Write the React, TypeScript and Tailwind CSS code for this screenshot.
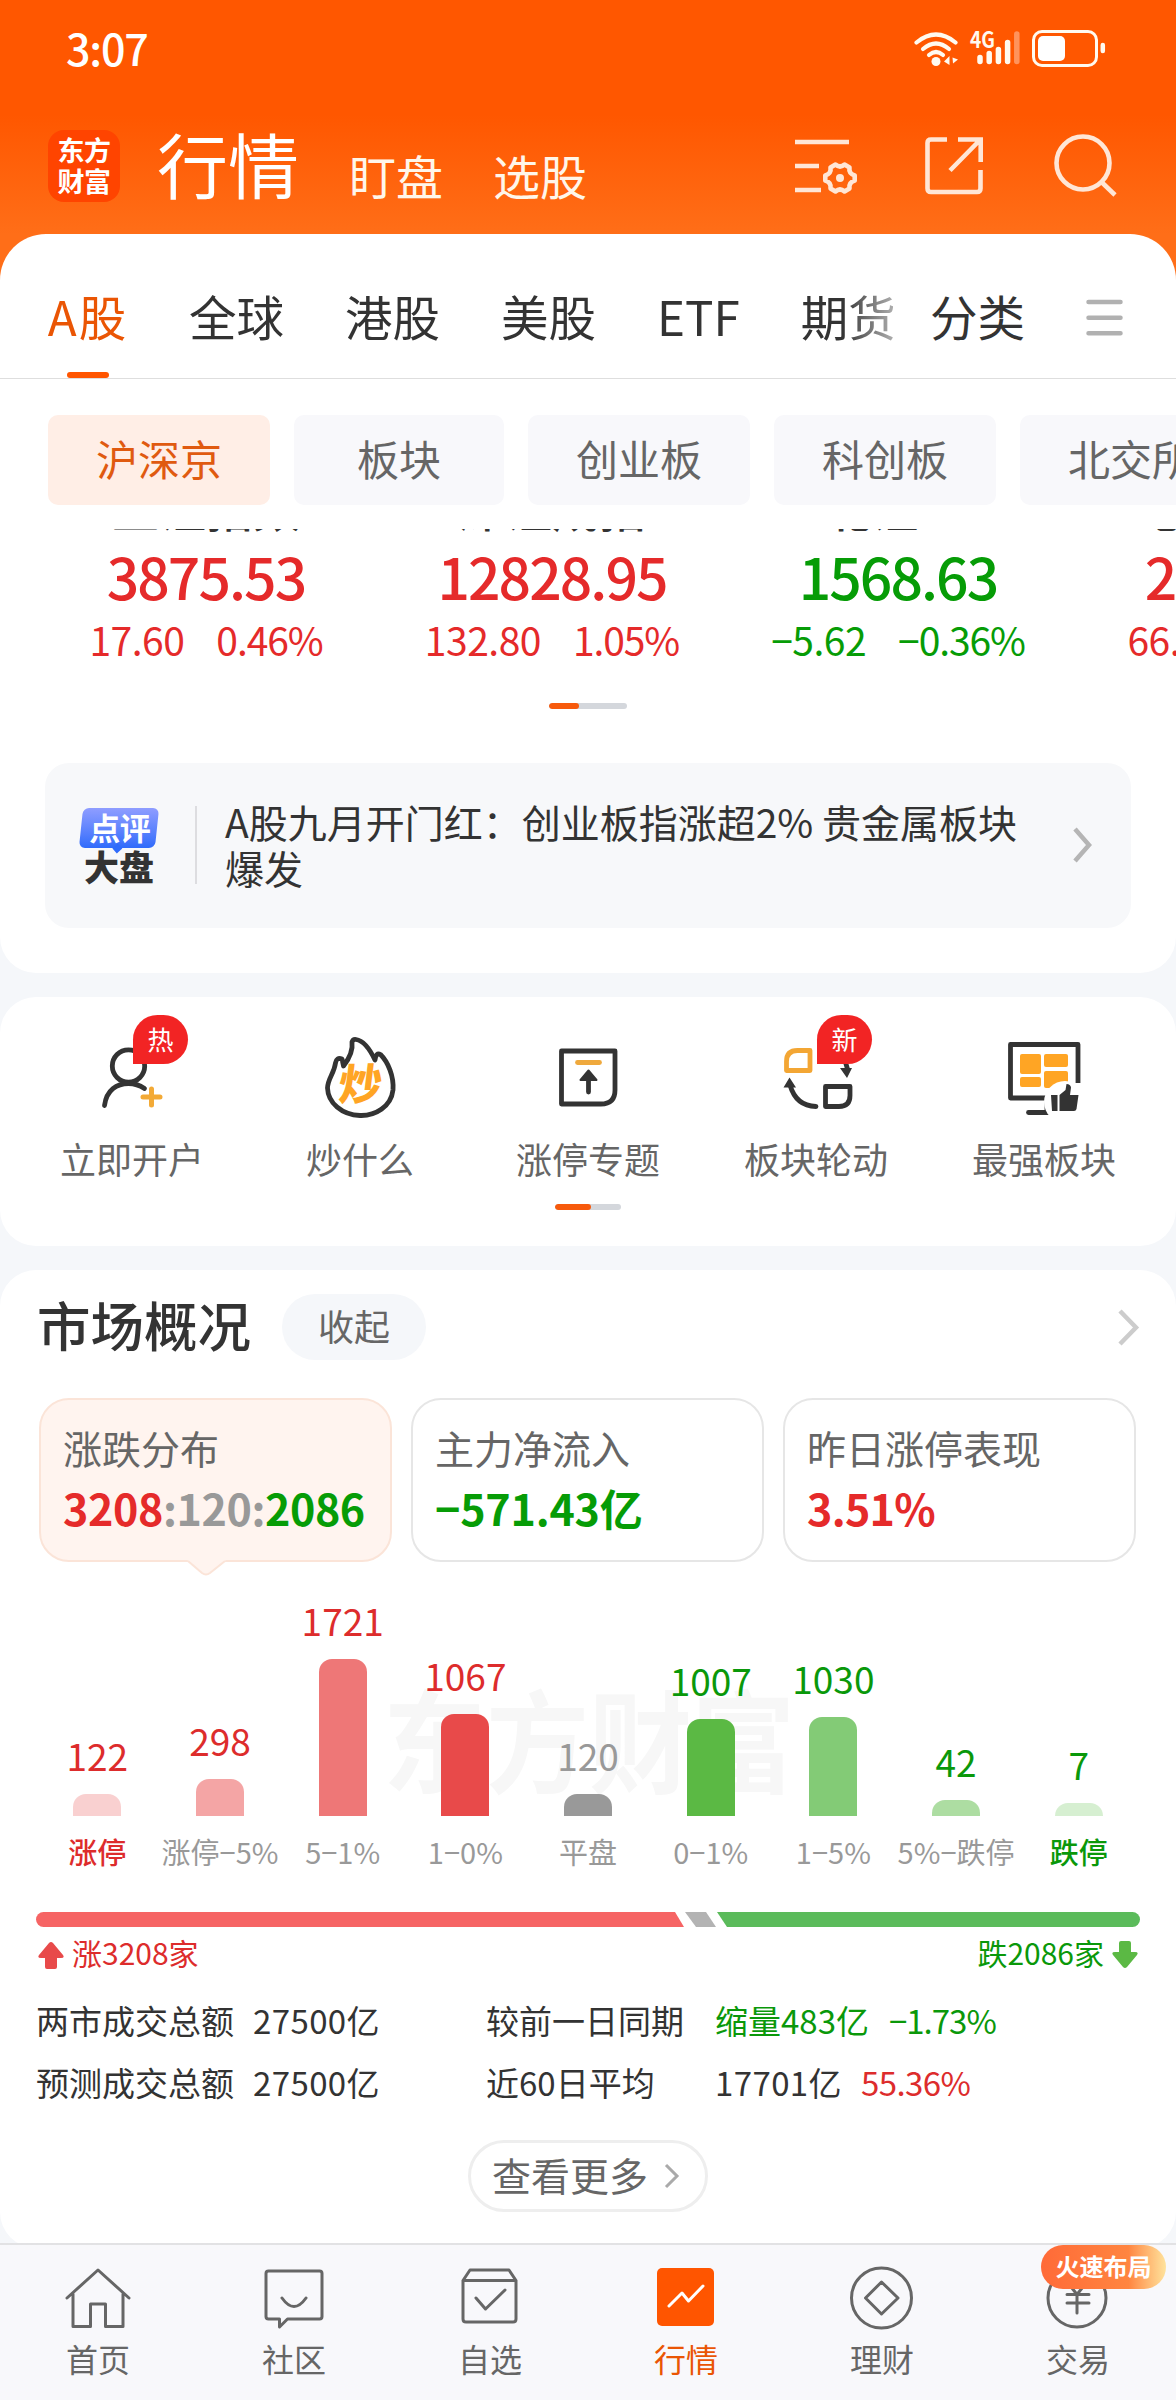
import type { ReactNode } from "react";

const ORANGE = "text-[#ea5504]";
const RED = "text-[#dd2c2c]";
const GREEN = "text-[#0a980a]";

const markets = ["全球", "港股", "美股", "ETF", "期货"];

const chips = [
  { name: "沪深京", width: "w-[222px]" },
  { name: "板块", width: "w-[210px]" },
  { name: "创业板", width: "w-[222px]" },
  { name: "科创板", width: "w-[222px]" },
  { name: "北交所", width: "w-[222px]" },
];

const indices = [
  { name: "上证指数", value: "3875.53", diff: "17.60", pct: "0.46%", tone: "text-[#e52a2a]" },
  { name: "深证成指", value: "12828.95", diff: "132.80", pct: "1.05%", tone: "text-[#e52a2a]" },
  { name: "北证50", value: "1568.63", diff: "−5.62", pct: "−0.36%", tone: "text-[#069c06]" },
  { name: "创业板指", value: "2956.37", diff: "66.24", pct: "2.29%", tone: "text-[#e52a2a]" },
];

const distribution = [
  { count: 122, height: 22, bar: "bg-[#f9d0d0]", tone: RED, label: "涨停", labelTone: "text-[#dd2c2c] font-medium" },
  { count: 298, height: 37, bar: "bg-[#f4a5a5]", tone: RED, label: "涨停−5%", labelTone: "text-[#999]" },
  { count: 1721, height: 157, bar: "bg-[#ee7777]", tone: RED, label: "5−1%", labelTone: "text-[#999]" },
  { count: 1067, height: 102, bar: "bg-[#e84a4a]", tone: RED, label: "1−0%", labelTone: "text-[#999]" },
  { count: 120, height: 22, bar: "bg-[#999]", tone: "text-[#999]", label: "平盘", labelTone: "text-[#999]" },
  { count: 1007, height: 97, bar: "bg-[#5bb944]", tone: GREEN, label: "0−1%", labelTone: "text-[#999]" },
  { count: 1030, height: 99, bar: "bg-[#83cb76]", tone: GREEN, label: "1−5%", labelTone: "text-[#999]" },
  { count: 42, height: 16, bar: "bg-[#addda2]", tone: GREEN, label: "5%−跌停", labelTone: "text-[#999]" },
  { count: 7, height: 13, bar: "bg-[#d6efd1]", tone: GREEN, label: "跌停", labelTone: "text-[#0a980a] font-medium" },
];

function StatusBar() {
  return (
    <div className="flex h-[100px] items-center justify-between pl-[66px] pr-[70px]">
      <span className="-mt-[6px] text-[43px] leading-none font-medium tracking-[-1.200px] text-white">3:07</span>
      <svg width="192" height="40" viewBox="0 0 192 40" className="-mt-[1px]" fill="none" stroke="#fffaf0" strokeLinecap="round">
        <g strokeWidth="4.2">
          <path d="M2.500 12.500Q22 -3.500 41.500 12.500" />
          <path d="M9 19Q22 8 35 19" />
          <path d="M15 25Q22 19 29 25" />
        </g>
        <circle cx="22" cy="31.500" r="4.500" fill="#fffaf0" stroke="none" />
        <path d="M35.500 26v9l-5.500-3.500zM38 26v9M38.500 27.500l5.500 2-5 4z" fill="#fffaf0" stroke="none" />
        <text x="56" y="18" fontSize="22" fontWeight="700" fill="#fffaf0" stroke="none" textLength="25" lengthAdjust="spacingAndGlyphs">4G</text>
        <path strokeWidth="5.500" d="M66 27.500v4M75.200 23.500v8M84.400 19.500v12M93.600 12.500v19" />
        <path strokeWidth="5.500" stroke="#ff935c" d="M102.800 4v27.500" />
        <rect x="119.500" y="1.500" width="63" height="34" rx="8.500" strokeWidth="3" />
        <rect x="124" y="6" width="27" height="25" rx="5" fill="white" stroke="none" />
        <path strokeWidth="4.500" d="M188.800 15v6" />
      </svg>
    </div>
  );
}

function TopBar() {
  return (
    <div className="relative flex h-[134px] pl-[48px]">
      <div className="mt-[30px] flex size-[72px] flex-col items-center justify-center rounded-[16px] bg-[#ff4400] pb-[3px] text-[27px] leading-[31px] font-bold tracking-[-0.5px] text-white">
        <span>东方</span>
        <span>财富</span>
      </div>
      <span className="ml-[37px] mt-[27px] text-[71px] leading-[70px] text-white">行情</span>
      <span className="ml-[50px] mt-[51px] text-[47px] leading-[47px] text-[#fff6ea]">盯盘</span>
      <span className="ml-[50px] mt-[51px] text-[47px] leading-[47px] text-[#fff6ea]">选股</span>
      <svg className="ml-[206px] mt-[32px] shrink-0" width="330" height="70" viewBox="793 132 330 70" fill="none" stroke="#ffe6d6" strokeWidth="4.600">
        <path d="M795 142h54M795 166h24M795 190h26" />
        <path strokeLinejoin="round" d="M835.500 164.500Q840 168.500 844.500 164.500L849.500 167.500Q848.500 173.500 854.700 175.500V180.500Q848.500 182.500 849.500 188.500L844.500 191.500Q840 187.500 835.500 191.500L830.500 188.500Q831.500 182.500 825.300 180.500V175.500Q831.500 173.500 830.500 167.500Z" />
        <circle cx="840" cy="178" r="4" fill="#ffe6d6" stroke="none" />
        <path d="M947 139.500h-16q-3.500 0-3.500 3.500v45.500q0 3.500 3.500 3.500h46q3.500 0 3.500-3.500V170M958 139.500h22.700V162M980 140L950 170.500" />
        <circle cx="1083" cy="163" r="26.500" />
        <path d="M1101.500 182L1115 195" />
      </svg>
    </div>
  );
}

function MarketTabs() {
  return (
    <div className="flex h-[145px] rounded-t-[46px] border-b border-[#dedede] bg-white text-[47.500px] leading-[47px] text-[#333]">
      <div className="ml-[48px] flex w-[845px] gap-[61px] overflow-hidden pt-[58px] whitespace-nowrap [mask-image:linear-gradient(to_right,black_94%,#0006)]">
        <div className={"flex h-[86px] w-[80px] flex-col items-center justify-between " + ORANGE}>
          <span className="tracking-[2px]">A股</span>
          <span className="mr-[1px] h-[6px] w-[42px] rounded-[3px] bg-[#ff5500]" />
        </div>
        {markets.map((m) => (
          <span key={m}>{m}</span>
        ))}
      </div>
      <span className="ml-[37px] pt-[58px]">分类</span>
      <svg className="mt-[62px] ml-[59px]" width="40" height="42" fill="none" stroke="#b1b1b1" strokeWidth="4.500" strokeLinecap="round">
        <path d="M4.500 6h32M4.500 21.700h32M4.500 37.300h32" />
      </svg>
    </div>
  );
}

function Pager({ className, active }: { className: string; active: string }) {
  return (
    <div className={"mx-auto h-[6px] overflow-hidden rounded-full bg-[#d4d7dc] " + className}>
      <div className={"h-full rounded-full bg-[#f75a0c] " + active} />
    </div>
  );
}

function CommentLogo() {
  return (
    <div className="ml-[1px] flex w-[80px] flex-col items-center pt-[45px]">
      <div className="relative flex h-[40px] w-[76px] -skew-x-6 items-center justify-center rounded-[6px] bg-linear-to-b from-[#8f9dff] to-[#2f6bfb] pb-[4px] text-[31px] leading-none font-bold tracking-[-0.5px] text-white">
        <span className="skew-x-6">点评</span>
        <span className="absolute -bottom-[4px] left-[35px] size-[7px] rotate-45 bg-[#2f6bfb]" />
      </div>
      <span className="text-[35px] leading-[35px] font-black text-[#333]">大盘</span>
    </div>
  );
}

function IndexPanel() {
  return (
    <section className="h-[594px] overflow-hidden rounded-b-[36px] bg-white pt-[36px]">
      <div className="flex gap-[24px] overflow-hidden pl-[48px]">
        {chips.map((c, i) => (
          <div
            key={c.name}
            className={
              "flex h-[90px] shrink-0 items-center justify-center rounded-[10px] pb-[5px] text-[42px] leading-none " +
              c.width +
              (i === 0 ? " bg-[#ffeee6] text-[#e05a10]" : " bg-[#f8f8fb] text-[#666]")
            }
          >
            {c.name}
          </div>
        ))}
      </div>
      <div className="mt-[24px] flex h-[174px] overflow-hidden pl-[33px]">
        {indices.map((x) => (
          <div key={x.name} className="flex w-[346px] shrink-0 flex-col items-center">
            <span className="-mt-[45px] text-[47px] leading-[46px] font-medium text-[#333]">{x.name}</span>
            <span className={"mt-[17px] text-[57px] leading-[57px] font-medium tracking-[-1.900px] " + x.tone}>{x.value}</span>
            <span className={"mt-[16px] flex gap-[32px] text-[39px] leading-[39px] " + x.tone}>
              <span className="tracking-[-0.500px]">{x.diff}</span>
              <span className="tracking-[-1.100px]">{x.pct}</span>
            </span>
          </div>
        ))}
      </div>
      <Pager className="w-[78px]" active="w-[30px]" />
      <div className="mx-[45px] mt-[54px] flex h-[165px] rounded-[24px] bg-[#f7f8fa] pl-[33px]">
        <CommentLogo />
        <div className="ml-[36px] mt-[43px] h-[78px] w-[2px] bg-[#dddde0]" />
        <p className="ml-[28px] mt-[36px] w-[810px] text-[39px] leading-[45.500px] text-[#333]">
          A股九月开门红：创业板指涨超2% 贵金属板块爆发
        </p>
        <svg className="mt-[62px] ml-[35px]" width="24" height="40" fill="none" stroke="#b5b5b5" strokeWidth="4.500">
          <path d="M5 4l14 16L5 36" />
        </svg>
      </div>
    </section>
  );
}

function Badge({ children }: { children: ReactNode }) {
  return (
    <span className="absolute top-[18px] left-[115px] flex h-[49px] w-[55px] items-center justify-center rounded-t-[25px] rounded-br-[25px] bg-[#f22424] pb-[2px] text-[26px] leading-none text-white">
      {children}
    </span>
  );
}

function Shortcut({ label, badge, children }: { label: string; badge?: string; children: ReactNode }) {
  return (
    <div className="relative flex w-[228px] flex-col items-center">
      <svg className="mt-[34px]" width="90" height="90" viewBox="0 0 90 90" fill="none" stroke="#333" strokeWidth="4.800">
        {children}
      </svg>
      {badge && <Badge>{badge}</Badge>}
      <span className="mt-[17px] text-[36px] leading-[40px] text-[#666]">{label}</span>
    </div>
  );
}

function Shortcuts() {
  return (
    <section className="mt-[24px] h-[249px] rounded-[36px] bg-white">
      <div className="flex pl-[18px]">
        <Shortcut label="立即开户" badge="热">
          <circle cx="41.500" cy="35" r="16.200" />
          <path strokeLinecap="round" d="M17.500 74.500C19.500 59 30 52.500 41.500 52.500q8.500 0 16 5" />
          <path stroke="#f3aa36" strokeWidth="5" strokeLinecap="round" d="M64.500 58v16M56 66h17" />
        </Shortcut>
        <Shortcut label="炒什么">
          <path strokeLinejoin="round" d="M41 8.500Q51 10 60 29q1-8 5.500-5.500C73 31 79 45 78 59 76 76 60 85 45 84.500 27 84 13 72 12.500 57 13 47 19 43 20.500 32q1-6 6.500-4l1.500 7q10-13 8.500-24 1-3 4-2.500z" />
          <text x="45" y="69" textAnchor="middle" fontSize="43" fontWeight="900" fill="#ffa524" stroke="none" transform="skewX(-7) translate(7 0)">炒</text>
        </Shortcut>
        <Shortcut label="涨停专题">
          <path strokeLinejoin="round" d="M18.500 20h53.500v39q0 14-14 14H18.500z" />
          <path stroke="#efa93d" strokeLinecap="round" d="M34.500 31.500h22" />
          <path strokeLinecap="round" d="M45.500 43v18" />
          <path fill="#333" strokeWidth="2" strokeLinejoin="round" d="M45.500 39.500l8 9.500h-16z" />
        </Shortcut>
        <Shortcut label="板块轮动" badge="新">
          <path stroke="#f3a634" strokeLinejoin="round" d="M15.500 39.500v-9q0-11 11-11h12.500v20z" />
          <path strokeLinejoin="round" d="M54.500 55.500h24.500v9q0 11-11 11H54.500z" />
          <path strokeLinecap="round" d="M19 54Q25 75 45 75.500" />
          <path fill="#333" stroke="none" d="M18.500 46.500l6.500 10H12.500zM69 37h12l-5 10zM71 28h5l3 10h-5z" />
        </Shortcut>
        <Shortcut label="最强板块">
          <path strokeLinejoin="round" d="M54 67H11.500V13.500h67.500V52" />
          <path d="M48 68v14" />
          <path strokeLinecap="round" d="M29.500 81.500H50" />
          <g fill="#ffa524" stroke="none">
            <rect x="21" y="23" width="21" height="20" rx="2" />
            <rect x="45" y="23" width="24" height="13" rx="2" />
            <rect x="21" y="46" width="21" height="10" rx="2" />
            <rect x="45" y="40" width="24" height="17" rx="2" />
          </g>
          <circle cx="66" cy="71" r="21" fill="white" stroke="none" />
          <path fill="#333" stroke="none" d="M52 64h6.500v16H53zM60.500 64l6-5 1-6q4 0 4.500 3.500L71 64h8.500l-2 14q-.5 2-2.500 2H60.500z" />
        </Shortcut>
      </div>
      <Pager className="mt-[26px] w-[66px]" active="w-[36px]" />
    </section>
  );
}

function SummaryCard({ title, children, active }: { title: string; children: ReactNode; active?: boolean }) {
  return (
    <div
      className={
        "relative h-[164px] w-[353px] rounded-[30px] border-2 pl-[22px] " +
        (active ? "border-[#fbe4d8] bg-[#fff4ef]" : "border-[#e6e6e6] bg-white")
      }
    >
      <div className="mt-[28px] text-[39px] leading-[39px] text-[#666]">{title}</div>
      <div className="mt-[21px] text-[43px] leading-[39px] font-bold whitespace-nowrap">{children}</div>
      {active && (
        <svg className="absolute top-[158px] left-[146px]" width="40" height="18" fill="#fff4ef" stroke="#fbe4d8" strokeWidth="2">
          <path d="M0 0L1 3l14 12q4 3 8 0L38 3 40 0" stroke="none" />
          <path d="M1 3l14 12q4 3 8 0L38 3" />
        </svg>
      )}
    </div>
  );
}

function Distribution() {
  return (
    <div className="relative mt-[23px] flex h-[281px] px-[36px]">
      <span className="absolute top-[92px] left-[383px] scale-y-108 text-[103px] leading-[120px] font-bold text-[#f7f7f7]">东方财富</span>
      {distribution.map((d) => (
        <div key={d.label} className="relative flex h-full w-[122.700px] flex-col items-center justify-end">
          <span className={"mb-[20px] text-[37px] leading-[37px] " + d.tone}>{d.count}</span>
          <div className={"w-[48px] shrink-0 rounded-t-[13px] " + d.bar} style={{ height: d.height }} />
          <span className={"mt-[20px] text-[29px] leading-[30px] whitespace-nowrap " + d.labelTone}>{d.label}</span>
        </div>
      ))}
    </div>
  );
}

function Breadth() {
  return (
    <div className="px-[36px]">
      <svg className="mt-[46px] block" width="1104" height="15">
        <path fill="#f66464" d="M7.500 0H639l9 15H7.500a7.500 7.500 0 010-15z" />
        <path fill="#b3b3b3" d="M649 0h21l10 15h-20z" />
        <path fill="#5bbb5b" d="M681 0h415.500a7.500 7.500 0 010 15H691z" />
      </svg>
      <div className="mt-[9px] flex h-[34px] items-center justify-between text-[30px] leading-none">
        <span className={"flex items-center " + RED}>
          <svg className="mt-[5px] mr-[8px] ml-[2px]" width="26" height="27" fill="#e84a4a">
            <path d="M11 1q2-2 4 0l10 12q2 3-2 3h-4v9q0 2-2 2H9q-2 0-2-2v-9H3q-4 0-2-3z" />
          </svg>
          <span className="-mt-[2px]">涨3208家</span>
        </span>
        <span className={"flex items-center " + GREEN}>
          <span className="-mt-[2px]">跌2086家</span>
          <svg className="mt-[3px] mr-[2px] ml-[8px]" width="26" height="27" fill="#5bb944">
            <path d="M11 26q2 2 4 0l10-12q2-3-2-3h-4V2q0-2-2-2H9Q7 0 7 2v9H3q-4 0-2 3z" />
          </svg>
        </span>
      </div>
    </div>
  );
}

function Turnover() {
  return (
    <div className="mt-[19px] grid grid-cols-[217px_233px_229px_auto] px-[36px] text-[33px] leading-[62px] whitespace-nowrap text-[#333]">
      <span>两市成交总额</span>
      <span className="tracking-[0.400px]">27500亿</span>
      <span>较前一日同期</span>
      <span className={GREEN}>
        缩量483亿<span className="ml-[20px] tracking-[-1px]">−1.73%</span>
      </span>
      <span>预测成交总额</span>
      <span className="tracking-[0.400px]">27500亿</span>
      <span>近60日平均</span>
      <span>
        <span className="tracking-[0.400px]">17701亿</span>
        <span className={"ml-[19px] tracking-[-0.600px] " + RED}>55.36%</span>
      </span>
    </div>
  );
}

function MarketOverview() {
  return (
    <section className="mt-[24px] h-[978px] rounded-[36px] bg-white">
      <div className="flex h-[128px] pl-[37px]">
        <h2 className="mt-[27px] text-[53.500px] leading-[54px] font-medium text-[#333]">市场概况</h2>
        <span className="ml-[31px] mt-[24px] flex h-[66px] w-[144px] items-center justify-center rounded-full bg-[#f5f7fa] pb-[4px] text-[36px] leading-none text-[#666]">
          收起
        </span>
        <svg className="mt-[36px] ml-[689px]" width="26" height="42" fill="none" stroke="#ccc" strokeWidth="4.500">
          <path d="M5 5l16 16.500L5 38" />
        </svg>
      </div>
      <div className="flex gap-[19px] px-[39px]">
        <SummaryCard title="涨跌分布" active>
          <span className="tracking-[-0.400px]">
            <span className="text-[#e52a2a]">3208</span>
            <span className="text-[#999]">:120:</span>
            <span className="text-[#069c06]">2086</span>
          </span>
        </SummaryCard>
        <SummaryCard title="主力净流入">
          <span className="tracking-[-0.200px] text-[#069c06]">−571.43亿</span>
        </SummaryCard>
        <SummaryCard title="昨日涨停表现">
          <span className="tracking-[-0.700px] text-[#e52a2a]">3.51%</span>
        </SummaryCard>
      </div>
      <Distribution />
      <Breadth />
      <Turnover />
      <div className="mx-auto mt-[27px] flex h-[72px] w-[240px] items-center rounded-full border-3 border-[#eee] pb-[4px] pl-[21px] text-[39px] leading-none text-[#666]">
        查看更多
        <svg className="mt-[4px] ml-[15px]" width="18" height="28" fill="none" stroke="#aaa" strokeWidth="3">
          <path d="M3 3l11 11L3 25" />
        </svg>
      </div>
    </section>
  );
}

function NavItem({ label, active, children }: { label: string; active?: boolean; children: ReactNode }) {
  return (
    <div className="flex w-[196px] flex-col items-center">
      <svg className="mt-[20px]" width="68" height="68" viewBox="0 0 68 68" fill="none" stroke="#666" strokeWidth="3" strokeLinejoin="round" strokeLinecap="round">
        {children}
      </svg>
      <span className={"mt-[8px] text-[32px] leading-[34px] " + (active ? ORANGE : "text-[#666]")}>{label}</span>
    </div>
  );
}

function BottomNav() {
  return (
    <nav className="absolute bottom-0 left-0 flex h-[157px] w-full border-t-2 border-[#e2e2e4] bg-[#f8f8fb]">
      <NavItem label="首页">
        <path d="M3 33L34 5l31 28M9 29v32.500h17.500V39h15v22.500H59V29" />
      </NavItem>
      <NavItem label="社区">
        <path d="M8.500 6h51q2.500 0 2.500 2.500v43q0 2.500-2.500 2.500H27.500l-8 8V54h-11Q6 54 6 51.500v-43Q6 6 8.500 6zM22 33q12 17 24 0" />
      </NavItem>
      <NavItem label="自选">
        <path d="M7 15.500h53V54q0 3-3 3H10q-3 0-3-3zM7 15.500l7-10.500h39l7 10.500M20 33l9.500 11L49 25" />
      </NavItem>
      <NavItem label="行情" active>
        <rect x="5" y="3" width="57" height="58" rx="5" fill="#ff5500" stroke="none" />
        <path stroke="white" d="M17 41l13-13 6.500 8L51 21" />
      </NavItem>
      <NavItem label="理财">
        <circle cx="33.500" cy="33" r="30" />
        <path d="M33.500 17L50 33 33.500 49 17.500 33z" />
      </NavItem>
      <NavItem label="交易">
        <circle cx="33" cy="33" r="29" />
        <path d="M23 29.500h22M23 38h22M33 29.500V48M24 18l9 11.500L42 18" />
      </NavItem>
      <span className="absolute top-0 right-[10px] flex h-[44px] w-[125px] items-center justify-center rounded-[22px] bg-linear-to-r from-[#ff6a38] via-[#ff8540] via-70% to-[#ffe39c] pb-[3px] text-[24px] leading-none font-bold text-white">
        火速布局
      </span>
    </nav>
  );
}

export default function App() {
  return (
    <div
      lang="zh-CN"
      className="relative h-[2400px] w-[1176px] overflow-hidden bg-[#f5f7fa] font-['Noto_Sans_CJK_SC',sans-serif]"
    >
      <header className="bg-[linear-gradient(#ff5700_0,#ff5700_115px,#ff6e18_234px,#ff6e18_100%)]">
        <StatusBar />
        <TopBar />
        <MarketTabs />
      </header>
      <IndexPanel />
      <Shortcuts />
      <MarketOverview />
      <BottomNav />
    </div>
  );
}
